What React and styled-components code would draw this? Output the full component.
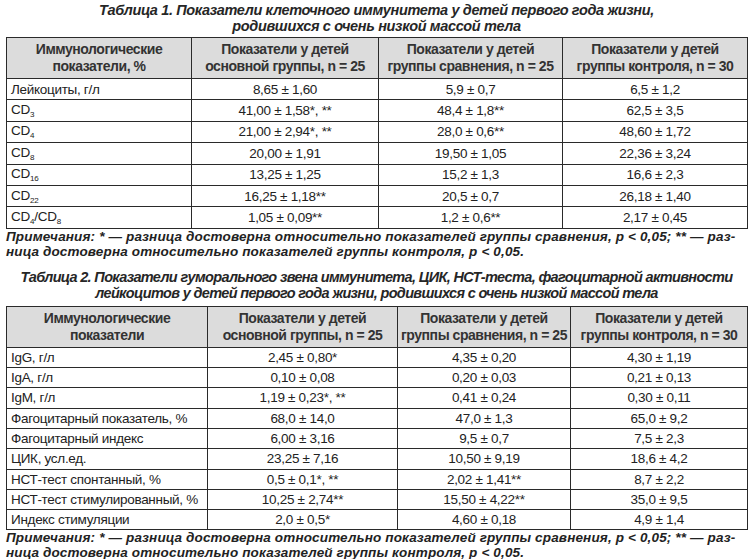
import React from 'react';
import styled, { createGlobalStyle } from 'styled-components';

const GlobalStyle = createGlobalStyle`
  body {
    margin: 0;
    background: #ffffff;
    font-family: "Liberation Sans", Arial, sans-serif;
    color: #222;
  }
`;

const Page = styled.div`
  width: 741px;
  padding: 2px 0 0 6px;
`;

const Caption = styled.div`
  text-align: center;
  font-weight: bold;
  font-style: italic;
  font-size: 14.5px;
  letter-spacing: ${(p) => p.$ls || -0.5}px;
  line-height: 16px;
  white-space: nowrap;
  color: #262626;
  margin-bottom: ${(p) => p.$gap || 3}px;
  margin-top: ${(p) => p.$top || 0}px;
`;

const Table = styled.table`
  width: 741px;
  border-collapse: collapse;
  table-layout: fixed;
  border: 1px solid #2a2a2a;
`;

const HeadCell = styled.th`
  background: #dcdcdc;
  border: 1px solid #2a2a2a;
  font-weight: bold;
  font-size: 14px;
  letter-spacing: -0.45px;
  line-height: 17px;
  color: #333;
  height: ${(p) => p.$h}px;
  padding: 0 2px;
  text-align: center;
  white-space: nowrap;
`;

const Cell = styled.td`
  border: 1px solid #2a2a2a;
  font-size: 13.5px;
  letter-spacing: -0.3px;
  height: ${(p) => p.$h}px;
  padding: 0 ${(p) => (p.$left ? 4 : 2)}px;
  text-align: ${(p) => (p.$left ? 'left' : 'center')};
  white-space: nowrap;
  color: #222;
`;

const Sub = styled.sub`
  font-size: 8px;
  letter-spacing: 0;
  vertical-align: -3px;
`;

const Note = styled.div`
  font-weight: bold;
  font-style: italic;
  font-size: 13.5px;
  letter-spacing: 0.15px;
  line-height: 15px;
  white-space: nowrap;
  color: #222;
`;

const cd = (a, b) => (
  <>
    CD<Sub>{a}</Sub>
    {b && (
      <>
        /CD<Sub>{b}</Sub>
      </>
    )}
  </>
);

const table1 = [
  ['Лейкоциты, г/л', '8,65 ± 1,60', '5,9 ± 0,7', '6,5 ± 1,2'],
  [cd('3'), '41,00 ± 1,58*, **', '48,4 ± 1,8**', '62,5 ± 3,5'],
  [cd('4'), '21,00 ± 2,94*, **', '28,0 ± 0,6**', '48,60 ± 1,72'],
  [cd('8'), '20,00 ± 1,91', '19,50 ± 1,05', '22,36 ± 3,24'],
  [cd('16'), '13,25 ± 1,25', '15,2 ± 1,3', '16,6 ± 2,3'],
  [cd('22'), '16,25 ± 1,18**', '20,5 ± 0,7', '26,18 ± 1,40'],
  [cd('4', '8'), '1,05 ± 0,09**', '1,2 ± 0,6**', '2,17 ± 0,45'],
];

const table2 = [
  ['IgG, г/л', '2,45 ± 0,80*', '4,35 ± 0,20', '4,30 ± 1,19'],
  ['IgA, г/л', '0,10 ± 0,08', '0,20 ± 0,03', '0,21 ± 0,13'],
  ['IgM, г/л', '1,19 ± 0,23*, **', '0,41 ± 0,24', '0,30 ± 0,11'],
  ['Фагоцитарный показатель, %', '68,0 ± 14,0', '47,0 ± 1,3', '65,0 ± 9,2'],
  ['Фагоцитарный индекс', '6,00 ± 3,16', '9,5 ± 0,7', '7,5 ± 2,3'],
  ['ЦИК, усл.ед.', '23,25 ± 7,16', '10,50 ± 9,19', '18,6 ± 4,2'],
  ['НСТ-тест спонтанный, %', '0,5 ± 0,1*, **', '2,02 ± 1,41**', '8,7 ± 2,2'],
  ['НСТ-тест стимулированный, %', '10,25 ± 2,74**', '15,50 ± 4,22**', '35,0 ± 9,5'],
  ['Индекс стимуляции', '2,0 ± 0,5*', '4,60 ± 0,18', '4,9 ± 1,4'],
];

const DataTable = ({ cols, head, rows, headH, rowH }) => (
  <Table>
    <colgroup>
      {cols.map((w, i) => (
        <col key={i} style={{ width: w }} />
      ))}
    </colgroup>
    <thead>
      <tr>
        {head.map((h, i) => (
          <HeadCell key={i} $h={headH}>
            {h[0]}
            <br />
            {h[1]}
          </HeadCell>
        ))}
      </tr>
    </thead>
    <tbody>
      {rows.map((r, i) => (
        <tr key={i}>
          {r.map((c, j) => (
            <Cell key={j} $left={j === 0} $h={rowH}>
              {c}
            </Cell>
          ))}
        </tr>
      ))}
    </tbody>
  </Table>
);

const groupHead = [
  ['Показатели у детей', 'основной группы, n = 25'],
  ['Показатели у детей', 'группы сравнения, n = 25'],
  ['Показатели у детей', 'группы контроля, n = 30'],
];

const Notes = () => (
  <Note>
    Примечания: * — разница достоверна относительно показателей группы сравнения, p &lt; 0,05; ** — раз-
    <br />
    ница достоверна относительно показателей группы контроля, p &lt; 0,05.
  </Note>
);

export default function App() {
  return (
    <Page>
      <GlobalStyle />
      <Caption $ls={-0.35}>
        Таблица 1. Показатели клеточного иммунитета у детей первого года жизни,
        <br />
        родившихся с очень низкой массой тела
      </Caption>
      <DataTable
        cols={[185, 187, 184, 185]}
        head={[['Иммунологические', 'показатели, %'], ...groupHead]}
        rows={table1}
        headH={40}
        rowH={20.4}
      />
      <Notes />
      <Caption $top={10} $gap={5} $ls={-0.65}>
        Таблица 2. Показатели гуморального звена иммунитета, ЦИК, НСТ-теста, фагоцитарной активности
        <br />
        лейкоцитов у детей первого года жизни, родившихся с очень низкой массой тела
      </Caption>
      <DataTable
        cols={[201, 190, 173, 177]}
        head={[['Иммунологические', 'показатели'], ...groupHead]}
        rows={table2}
        headH={40}
        rowH={19.3}
      />
      <Notes />
    </Page>
  );
}
